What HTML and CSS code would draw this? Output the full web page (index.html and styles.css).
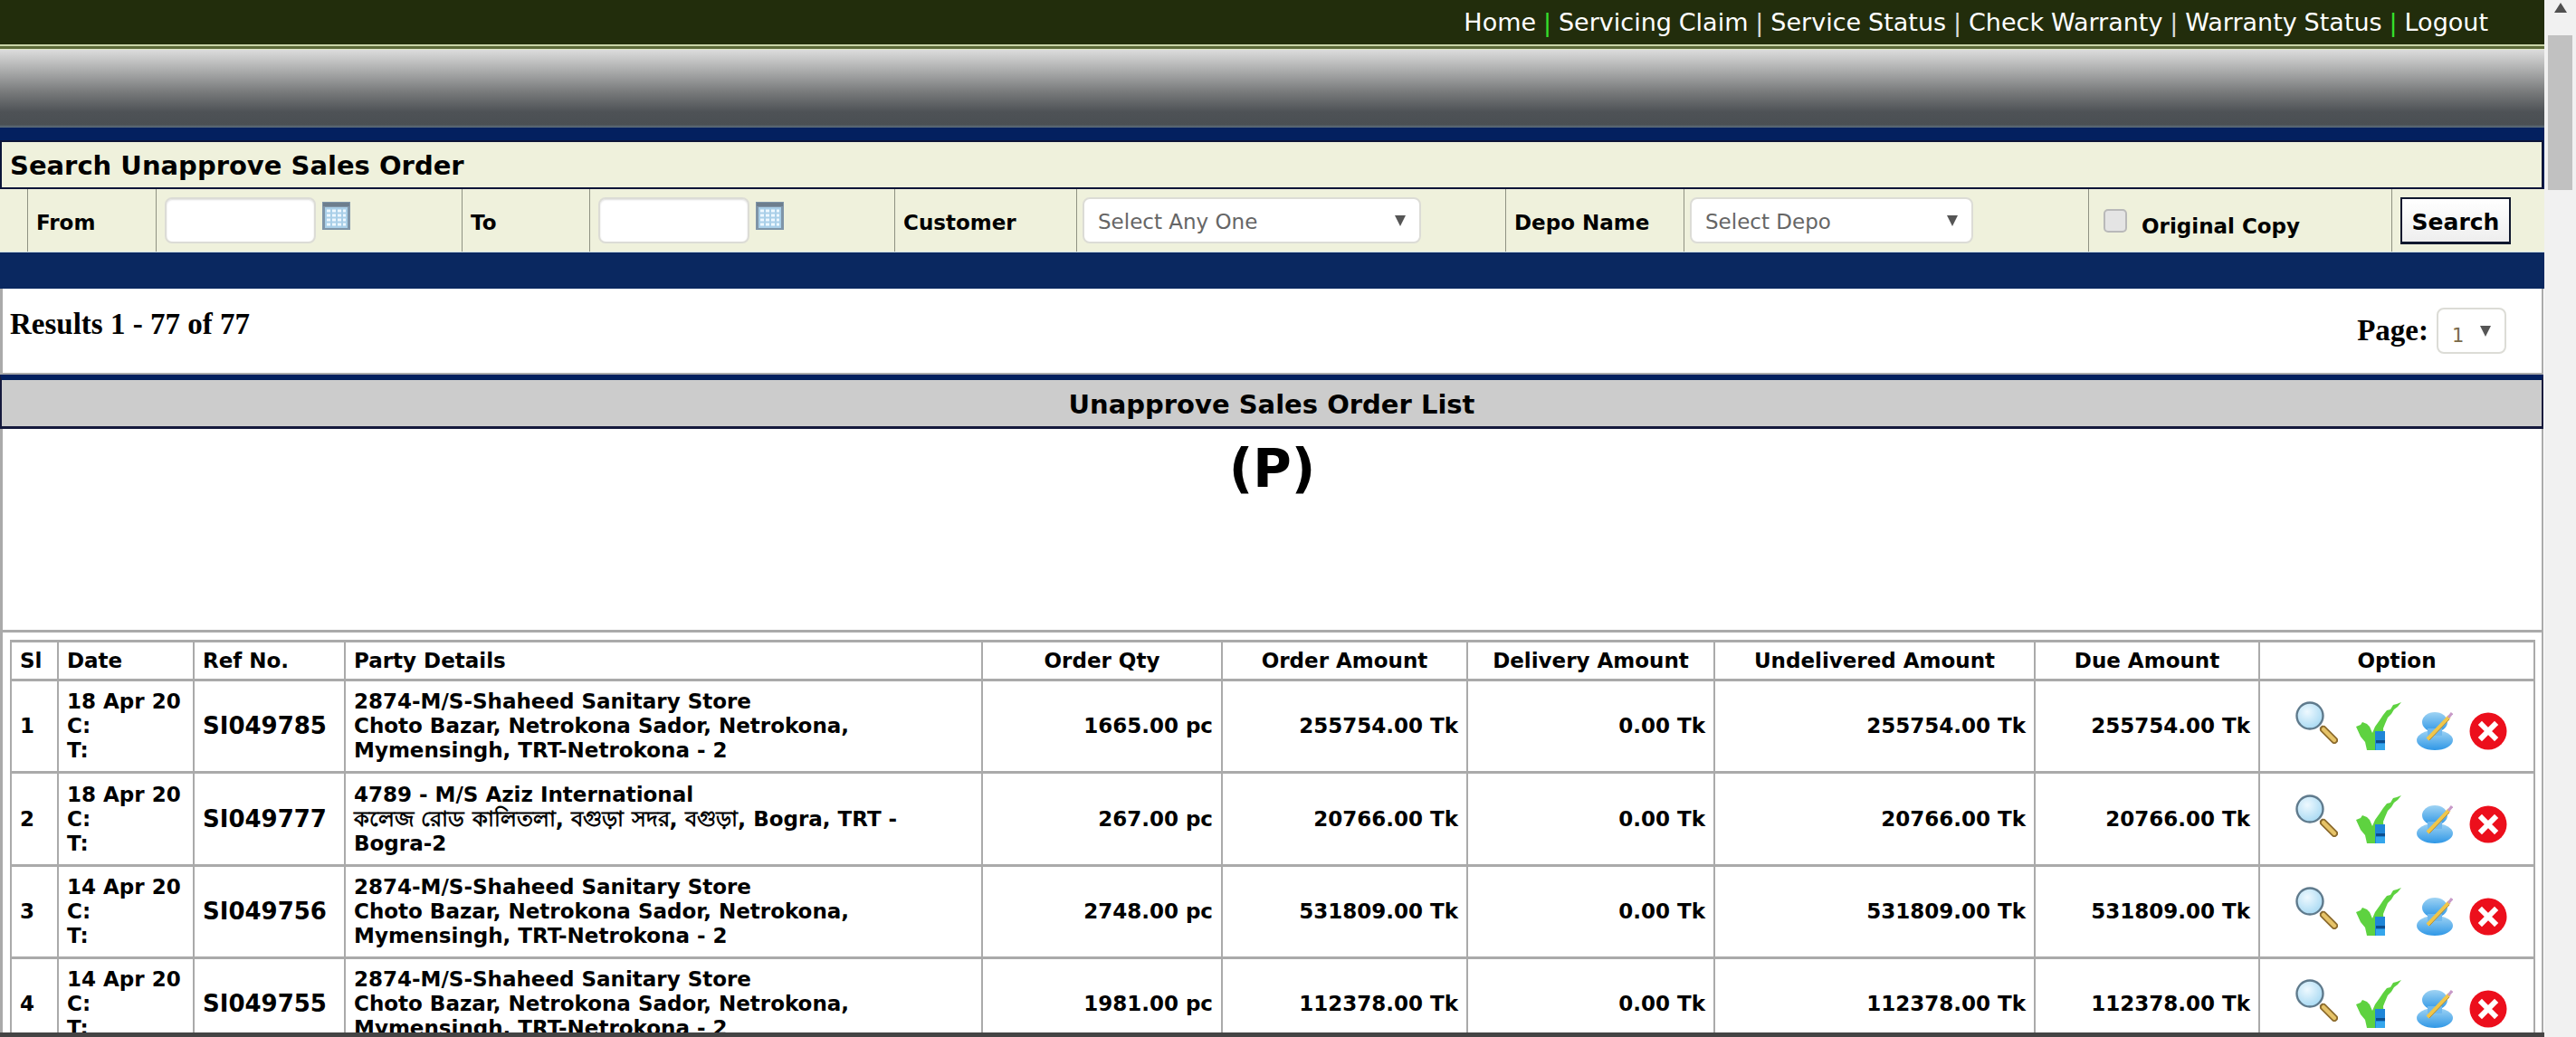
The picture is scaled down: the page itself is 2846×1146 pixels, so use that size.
FILE: index.html
```html
<!DOCTYPE html>
<html lang="en">
<head>
    <meta charset="UTF-8">
    <title>Search Unapprove Sales Order</title>
    <link rel="stylesheet" href="styles.css">
</head>
<body>
    <svg class="icon-defs" width="0" height="0">
        <defs>
            <radialGradient id="glass" cx="40%" cy="35%" r="70%">
                <stop offset="0" stop-color="#eef9ff"/>
                <stop offset="1" stop-color="#a5d8f2"/>
            </radialGradient>
            <linearGradient id="cloud" x1="0" y1="0" x2="0" y2="1">
                <stop offset="0" stop-color="#9fd3f3"/>
                <stop offset="1" stop-color="#2f97e6"/>
            </linearGradient>
            <symbol id="icon-view" viewBox="0 0 47 47">
                <line x1="28" y1="28" x2="33" y2="33" stroke="#7c7460" stroke-width="4"/>
                <line x1="31" y1="31" x2="43" y2="43" stroke="#8b6a2c" stroke-width="8" stroke-linecap="round"/>
                <line x1="31" y1="31" x2="43" y2="43" stroke="#e6c368" stroke-width="4.5" stroke-linecap="round"/>
                <circle cx="16" cy="16" r="14.5" fill="url(#glass)" stroke="#5f7a8c" stroke-width="2.4"/>
            </symbol>
            <symbol id="icon-approve" viewBox="0 0 50 53">
                <path d="M0 27 L5 25 L7 22 L12 24 L15 27 L18 34 L21 27 L26 20 L30 14 L34 9 L38 8 L41 3 L45 2 L50 0 L46 5 L42 8 L39 13 L35 17 L32 24 L30 29 L32 53 L12 53 L10 44 L5 38 Z" fill="#5ed240"/>
                <rect x="21" y="32" width="11" height="21" fill="#1f86d8"/>
                <rect x="22" y="42" width="10" height="3" fill="#0d4f8f"/>
                <rect x="22" y="46" width="10" height="7" fill="#35a6ec"/>
            </symbol>
            <symbol id="icon-edit" viewBox="0 0 40 42">
                <ellipse cx="20" cy="11" rx="14" ry="11" fill="url(#cloud)"/>
                <ellipse cx="20" cy="31" rx="20" ry="11" fill="url(#cloud)"/>
                <rect x="12" y="18" width="16" height="8" fill="#6fb8ee"/>
                <line x1="12" y1="30" x2="36" y2="5" stroke="#f0c64a" stroke-width="4"/>
                <line x1="14" y1="31" x2="36" y2="8" stroke="#b08a3a" stroke-width="1"/>
                <line x1="35" y1="6" x2="39" y2="1" stroke="#c89ac8" stroke-width="3"/>
            </symbol>
            <symbol id="icon-delete" viewBox="0 0 42 42">
                <circle cx="21" cy="21" r="20.5" fill="#ec0f1c"/>
                <path d="M14 14 L28 28 M28 14 L14 28" stroke="#fff" stroke-width="6" stroke-linecap="square"/>
            </symbol>
            <symbol id="icon-cal" viewBox="0 0 31 31">
                <rect width="31" height="31" fill="#7f95a8"/>
                <rect x="1" y="1" width="29" height="4" fill="#6d7e8e"/>
                <rect x="3" y="6" width="25" height="23" fill="#a9cfe8"/>
                <path d="M5 10 H26 M5 15 H26 M5 20 H26 M5 25 H26" stroke="#eef8ff" stroke-width="3" stroke-dasharray="4 2"/>
            </symbol>
        </defs>
    </svg>

    <div class="page">
        <div class="main">
            <div class="content">
                <div class="topbar">
                    <a href="#">Home</a> <span class="sep-green">|</span>
                    <a href="#">Servicing Claim</a> <span>|</span>
                    <a href="#">Service Status</a> <span>|</span>
                    <a href="#">Check Warranty</a> <span>|</span>
                    <a href="#">Warranty Status</a> <span class="sep-green">|</span>
                    <a href="#">Logout</a>
                </div>
                <div class="banner"></div>

                <form class="search-box">
                    <div class="search-title">Search Unapprove Sales Order</div>
                    <div class="search-row">
                        <div class="cell"></div>
                        <div class="cell"><label>From</label></div>
                        <div class="cell cell-input">
                            <input type="text" class="date-input">
                            <svg class="cal-icon"><use href="#icon-cal"/></svg>
                        </div>
                        <div class="cell"><label>To</label></div>
                        <div class="cell cell-input">
                            <input type="text" class="date-input">
                            <svg class="cal-icon"><use href="#icon-cal"/></svg>
                        </div>
                        <div class="cell"><label>Customer</label></div>
                        <div class="cell cell-input">
                            <div class="select-box select-customer">
                                <select><option>Select Any One</option></select>
                            </div>
                        </div>
                        <div class="cell"><label>Depo Name</label></div>
                        <div class="cell cell-input">
                            <div class="select-box select-depo">
                                <select><option>Select Depo</option></select>
                            </div>
                        </div>
                        <div class="cell cell-check">
                            <input type="checkbox" class="copy-check">
                            <label>Original Copy</label>
                        </div>
                        <div class="cell cell-input">
                            <button type="button" class="search-btn">Search</button>
                        </div>
                    </div>
                </form>
                <div class="navy-strip"></div>

                <div class="list-area">
                    <div class="results-row">
                        <div class="results-count">Results 1 - 77 of 77</div>
                        <div class="pager">
                            <span>Page:</span>
                            <div class="select-box select-page">
                                <select><option>1</option></select>
                            </div>
                        </div>
                    </div>

                    <div class="list-title">Unapprove Sales Order List</div>
                    <div class="print-head">(P)</div>

                    <div class="table-wrap">
                        <table class="order-table">
                            <colgroup>
                                <col class="c-sl">
                                <col class="c-date">
                                <col class="c-ref">
                                <col class="c-party">
                                <col class="c-qty">
                                <col class="c-order">
                                <col class="c-delivery">
                                <col class="c-undelivered">
                                <col class="c-due">
                                <col class="c-option">
                            </colgroup>
                            <thead>
                                <tr>
                                    <th>Sl</th>
                                    <th>Date</th>
                                    <th>Ref No.</th>
                                    <th>Party Details</th>
                                    <th class="mid">Order Qty</th>
                                    <th class="mid">Order Amount</th>
                                    <th class="mid">Delivery Amount</th>
                                    <th class="mid">Undelivered Amount</th>
                                    <th class="mid">Due Amount</th>
                                    <th class="mid">Option</th>
                                </tr>
                            </thead>
                            <tbody>
                                <tr>
                                    <td>1</td>
                                    <td>18 Apr 20<br>C:<br>T:</td>
                                    <td class="ref">SI049785</td>
                                    <td>2874-M/S-Shaheed Sanitary Store<br>Choto Bazar, Netrokona Sador, Netrokona, Mymensingh, TRT-Netrokona - 2</td>
                                    <td class="num">1665.00 pc</td>
                                    <td class="num">255754.00 Tk</td>
                                    <td class="num">0.00 Tk</td>
                                    <td class="num">255754.00 Tk</td>
                                    <td class="num">255754.00 Tk</td>
                                    <td class="options">
                                        <svg class="ic-view"><use href="#icon-view"/></svg>
                                        <svg class="ic-approve"><use href="#icon-approve"/></svg>
                                        <svg class="ic-edit"><use href="#icon-edit"/></svg>
                                        <svg class="ic-delete"><use href="#icon-delete"/></svg>
                                    </td>
                                </tr>
                                <tr class="row-tall">
                                    <td>2</td>
                                    <td>18 Apr 20<br>C:<br>T:</td>
                                    <td class="ref">SI049777</td>
                                    <td>4789 - M/S Aziz International<br><span class="bn">কলেজ রোড কালিতলা, বগুড়া সদর, বগুড়া,</span> Bogra, TRT - Bogra-2</td>
                                    <td class="num">267.00 pc</td>
                                    <td class="num">20766.00 Tk</td>
                                    <td class="num">0.00 Tk</td>
                                    <td class="num">20766.00 Tk</td>
                                    <td class="num">20766.00 Tk</td>
                                    <td class="options">
                                        <svg class="ic-view"><use href="#icon-view"/></svg>
                                        <svg class="ic-approve"><use href="#icon-approve"/></svg>
                                        <svg class="ic-edit"><use href="#icon-edit"/></svg>
                                        <svg class="ic-delete"><use href="#icon-delete"/></svg>
                                    </td>
                                </tr>
                                <tr>
                                    <td>3</td>
                                    <td>14 Apr 20<br>C:<br>T:</td>
                                    <td class="ref">SI049756</td>
                                    <td>2874-M/S-Shaheed Sanitary Store<br>Choto Bazar, Netrokona Sador, Netrokona, Mymensingh, TRT-Netrokona - 2</td>
                                    <td class="num">2748.00 pc</td>
                                    <td class="num">531809.00 Tk</td>
                                    <td class="num">0.00 Tk</td>
                                    <td class="num">531809.00 Tk</td>
                                    <td class="num">531809.00 Tk</td>
                                    <td class="options">
                                        <svg class="ic-view"><use href="#icon-view"/></svg>
                                        <svg class="ic-approve"><use href="#icon-approve"/></svg>
                                        <svg class="ic-edit"><use href="#icon-edit"/></svg>
                                        <svg class="ic-delete"><use href="#icon-delete"/></svg>
                                    </td>
                                </tr>
                                <tr>
                                    <td>4</td>
                                    <td>14 Apr 20<br>C:<br>T:</td>
                                    <td class="ref">SI049755</td>
                                    <td>2874-M/S-Shaheed Sanitary Store<br>Choto Bazar, Netrokona Sador, Netrokona, Mymensingh, TRT-Netrokona - 2</td>
                                    <td class="num">1981.00 pc</td>
                                    <td class="num">112378.00 Tk</td>
                                    <td class="num">0.00 Tk</td>
                                    <td class="num">112378.00 Tk</td>
                                    <td class="num">112378.00 Tk</td>
                                    <td class="options">
                                        <svg class="ic-view"><use href="#icon-view"/></svg>
                                        <svg class="ic-approve"><use href="#icon-approve"/></svg>
                                        <svg class="ic-edit"><use href="#icon-edit"/></svg>
                                        <svg class="ic-delete"><use href="#icon-delete"/></svg>
                                    </td>
                                </tr>
                            </tbody>
                        </table>
                    </div>
                </div>
            </div>
            <div class="bottom-edge"></div>
        </div>

        <div class="scrollbar">
            <div class="scroll-up"></div>
            <div class="scroll-thumb"></div>
        </div>
    </div>
</body>
</html>
```

FILE: styles.css
```css
* {
    box-sizing: border-box;
}

html, body {
    height: 100%;
}

body {
    margin: 0;
    overflow: hidden;
    background-color: #fff;
    font-family: "DejaVu Sans", Verdana, "Noto Sans", sans-serif;
    font-size: 23px;
    color: #000;
}

.icon-defs {
    position: absolute;
}

.page {
    display: flex;
    height: 100vh;
}

.main {
    display: flex;
    flex-direction: column;
    width: 2811px;
}

.content {
    flex: 1;
    min-height: 0;
    overflow: hidden;
}

.bottom-edge {
    height: 5px;
    background-color: #444;
}

/* barra de cima */
.topbar {
    height: 55px;
    padding: 0 62px 6px 0;
    background-color: #222d0c;
    border-bottom: 1px solid #dfe6c8;
    box-shadow: inset 0 -3px 0 #5d6b3a, inset 0 -5px 0 #c9d4a8;
    text-align: right;
    line-height: 49px;
    font-size: 27px;
    word-spacing: -0.7px;
    color: #ddd;
    white-space: nowrap;
}

.topbar a {
    color: #fff;
    text-decoration: none;
}

.sep-green {
    color: #35e02c;
}

.banner {
    height: 86px;
    background: linear-gradient(to bottom, #dcdcdc 0%, #b4b5b5 22%, #77797a 55%, #4e5256 80%, #4a4f53 96%, #5e7080 100%);
}

/* busca */
.search-box {
    display: block;
    margin: 0;
    padding-top: 14px;
    background-color: #03205f;
}

.search-title {
    height: 54px;
    padding-left: 9px;
    background-color: #eff1dc;
    border: 2px solid #0c1538;
    margin-right: 1px;
    line-height: 52px;
    font-size: 29px;
    font-weight: bold;
}

.search-row {
    display: grid;
    grid-template-columns: 30px 142px 338px 141px 337px 201px 474px 197px 447px 335px 169px;
    height: 70px;
    background-color: #eff1dc;
    border-bottom: 1px solid #cfe0e6;
}

.cell {
    display: flex;
    align-items: center;
    padding-left: 9px;
    border-left: 1px solid #8f9282;
}

.cell:first-child {
    border-left: 0;
}

.cell label {
    padding-top: 5px;
    font-weight: bold;
    font-size: 23px;
    color: #000;
}

.cell-input {
    align-items: flex-start;
    padding-top: 9px;
}

.date-input {
    width: 167px;
    height: 51px;
    background-color: #fff;
    border: 2px solid #dcdcd6;
    border-radius: 8px;
    box-shadow: inset 0 1px 2px #ddd;
}

.cal-icon {
    width: 31px;
    height: 31px;
    margin: 5px 0 0 7px;
}

.select-box {
    position: relative;
    height: 51px;
    background-color: #fff;
    border: 2px solid #dcdcd6;
    border-radius: 8px;
}

.select-box::after {
    content: "";
    position: absolute;
    top: 18px;
    right: 15px;
    border-left: 6px solid transparent;
    border-right: 6px solid transparent;
    border-top: 12px solid #555;
}

.select-box select {
    width: 100%;
    height: 100%;
    padding: 2px 0 0 15px;
    appearance: none;
    border: 0;
    background: transparent;
    font-family: inherit;
    font-size: 23px;
    color: #666;
}

.select-customer {
    width: 374px;
    margin-left: -3px;
}

.select-depo {
    width: 313px;
    margin-left: -3px;
}

.cell-check {
    align-items: flex-start;
    padding-left: 16px;
}

.copy-check {
    width: 26px;
    height: 26px;
    margin: 22px 16px 0 0;
    appearance: none;
    background-color: #e4e4e4;
    border: 2px solid #b9b9b9;
    border-radius: 5px;
}

.cell-check label {
    padding-top: 28px;
}

.search-btn {
    width: 122px;
    height: 52px;
    padding: 3px 0 0;
    background: linear-gradient(to bottom, #fff, #eeeeee);
    border: 2px solid #10182e;
    border-bottom-width: 3px;
    font-family: inherit;
    font-size: 25px;
    font-weight: bold;
    color: #000;
}

.navy-strip {
    height: 40px;
    background-color: #0a2860;
}

/* lista */
.list-area {
    background-color: #fff;
    border-left: 3px solid #aaa;
    border-right: 2px solid #aaa;
    margin-right: 1px;
}

.results-row {
    display: flex;
    justify-content: space-between;
    height: 95px;
    padding: 19px 39px 0 8px;
    font-family: "Liberation Serif", "Times New Roman", serif;
    font-weight: bold;
    border-bottom: 2px solid #aaa;
}

.results-count {
    font-size: 33px;
    line-height: 40px;
}

.pager {
    display: flex;
    gap: 9px;
    padding-top: 2px;
    font-size: 33px;
    line-height: 50px;
}

.select-page {
    width: 77px;
}

.select-page select {
    font-family: "DejaVu Sans", sans-serif;
    font-weight: normal;
    font-size: 21px;
    color: #7a6a4a;
}

.list-title {
    height: 60px;
    margin-left: -3px;
    margin-right: -2px;
    background-color: #ccc;
    border-top: 6px solid #03205f;
    border-bottom: 3px solid #14193c;
    border-left: 2px solid #14193c;
    border-right: 2px solid #14193c;
    text-align: center;
    line-height: 55px;
    font-size: 29px;
    font-weight: bold;
}

.print-head {
    height: 225px;
    border-bottom: 3px solid #aaa;
    text-align: center;
    line-height: 88px;
    font-size: 58px;
    font-weight: bold;
}

.table-wrap {
    padding: 8px 8px 0 8px;
}

.order-table {
    width: 2788px;
    table-layout: fixed;
    border-collapse: collapse;
    line-height: 27px;
}

.c-sl { width: 52px; }
.c-date { width: 150px; }
.c-ref { width: 167px; }
.c-party { width: 704px; }
.c-qty { width: 265px; }
.c-order { width: 271px; }
.c-delivery { width: 273px; }
.c-undelivered { width: 354px; }
.c-due { width: 248px; }
.c-option { width: 304px; }

.order-table th,
.order-table td {
    padding: 9px 9px;
    border-left: 2px solid #aaa;
    border-right: 2px solid #aaa;
    border-top: 3px solid #aaa;
    border-bottom: 3px solid #aaa;
    text-align: left;
    vertical-align: middle;
    font-weight: bold;
    font-size: 23px;
}

.order-table th {
    height: 43px;
    padding-top: 2px;
    padding-bottom: 2px;
}

.order-table tbody tr {
    height: 101px;
}

.order-table .row-tall {
    height: 103px;
}

.order-table th.mid {
    text-align: center;
}

.order-table td.num {
    text-align: right;
}

.order-table td.ref {
    font-size: 26px;
}

.bn {
    font-size: 24px;
}

.order-table td.options {
    padding: 0 0 0 39px;
    white-space: nowrap;
    font-size: 0;
}

.ic-view {
    width: 47px;
    height: 47px;
    margin-bottom: 8px;
    margin-right: 20px;
    vertical-align: middle;
}

.ic-approve {
    width: 50px;
    height: 53px;
    margin-right: 17px;
    vertical-align: middle;
}

.ic-edit {
    width: 40px;
    height: 42px;
    margin-top: 11px;
    margin-right: 18px;
    vertical-align: middle;
}

.ic-delete {
    width: 42px;
    height: 42px;
    margin-top: 11px;
    vertical-align: middle;
}

/* barra de rolagem */
.scrollbar {
    flex: 1;
    padding: 0 4px;
    background-color: #f1f1f1;
}

.scroll-up {
    width: 0;
    height: 0;
    margin: 3px auto 25px;
    border-left: 7px solid transparent;
    border-right: 7px solid transparent;
    border-bottom: 11px solid #505050;
}

.scroll-thumb {
    height: 171px;
    background-color: #c1c1c1;
}
```
